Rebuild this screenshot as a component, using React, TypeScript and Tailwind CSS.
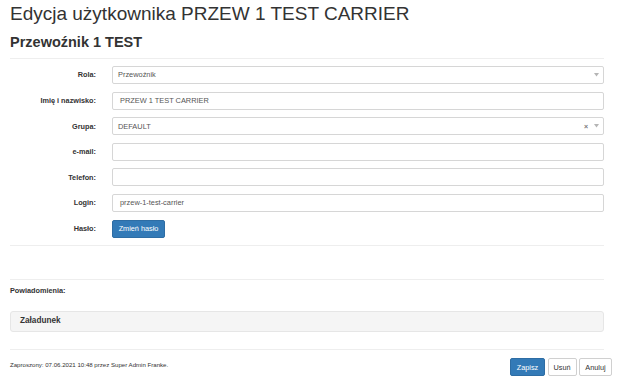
import React from "react";

function Row({ label, children }: { label: string; children: React.ReactNode }) {
  return (
    <div className="flex h-[18px] items-center">
      <div className="w-[86px] text-right text-[7.3px] font-bold leading-none text-[#333]">{label}</div>
      <div className="ml-[16px] flex h-full flex-1 items-center">{children}</div>
    </div>
  );
}

function Input({ value, pad = "pl-[7px]" }: { value?: string; pad?: string }) {
  return (
    <div className={`flex h-full w-full items-center rounded-[2px] border border-[#d6d6d6] bg-white ${pad} text-[7.4px] text-[#555]`}>
      {value}
    </div>
  );
}

function Arrow() {
  return (
    <svg width="5" height="4" viewBox="0 0 5 4" className="block">
      <path d="M0 0 L5 0 L2.5 3.5 Z" fill="#b5b5b5" />
    </svg>
  );
}

function Select({ value, clear }: { value: string; clear?: boolean }) {
  return (
    <div className="flex h-full w-full items-center rounded-[2px] border border-[#d6d6d6] bg-white pl-[5px] pr-[4px] text-[7.4px] text-[#555]">
      <span className="flex-1">{value}</span>
      {clear && <span className="mr-[6px] text-[7px] font-bold leading-none text-[#777]">×</span>}
      <Arrow />
    </div>
  );
}

export default function App() {
  return (
    <div className="min-h-[385px] w-[620px] bg-white pl-[10px] font-['Liberation_Sans',Arial,sans-serif] text-[#333]">
      <div className="w-[594px]">
        <h1 className="pt-[3px] text-[19px] leading-[22px] font-normal text-[#333]">
          Edycja użytkownika PRZEW 1 TEST CARRIER
        </h1>
        <h2 className="mt-[7.7px] text-[14.5px] leading-[18px] font-bold text-[#333]">Przewoźnik 1 TEST</h2>
        <div className="mt-[7.3px] h-px bg-[#eee]" />
        <div className="mt-[7px] flex flex-col gap-[7.6px]">
          <Row label="Rola:">
            <Select value="Przewoźnik" />
          </Row>
          <Row label="Imię i nazwisko:">
            <Input value="PRZEW 1 TEST CARRIER" />
          </Row>
          <Row label="Grupa:">
            <Select value="DEFAULT" clear />
          </Row>
          <Row label="e-mail:">
            <Input />
          </Row>
          <Row label="Telefon:">
            <Input />
          </Row>
          <Row label="Login:">
            <Input value="przew-1-test-carrier" />
          </Row>
          <Row label="Hasło:">
            <button className="flex h-full w-[53px] items-center justify-center rounded-[2px] border border-[#2e6da4] bg-[#337ab7] text-[7.3px] leading-none text-white">
              Zmień hasło
            </button>
          </Row>
        </div>
        <div className="mt-[7.4px] h-px bg-[#eee]" />
        <div className="mt-[33px] h-px bg-[#eee]" />
        <div className="mt-[5.8px] text-[7.3px] leading-[10px] font-bold text-[#333]">Powiadomienia:</div>
        <div className="mt-[15.2px] flex h-[21px] items-center rounded-[3px] border border-[#e6e6e6] bg-[#f5f5f5] pl-[9px] text-[8.2px] font-bold text-[#333]">
          Załadunek
        </div>
        <div className="mt-[17.3px] h-px bg-[#eee]" />
      </div>
      <div className="mt-[8px] flex w-[602px] items-start justify-between">
        <div className="mt-[1.5px] text-[6.1px] leading-[9px] text-[#333]">
          Zaproszony: 07.06.2021 10:48 przez Super Admin Franke.
        </div>
        <div className="flex gap-[2.5px]">
          <button className="flex h-[18px] w-[35px] items-center justify-center rounded-[2px] border border-[#2e6da4] bg-[#337ab7] text-[7.3px] leading-none text-white">
            Zapisz
          </button>
          <button className="flex h-[18px] w-[29px] items-center justify-center rounded-[2px] border border-[#d0d0d0] bg-white text-[7.3px] leading-none text-[#333]">
            Usuń
          </button>
          <button className="flex h-[18px] w-[33px] items-center justify-center rounded-[2px] border border-[#d0d0d0] bg-white text-[7.3px] leading-none text-[#333]">
            Anuluj
          </button>
        </div>
      </div>
    </div>
  );
}
